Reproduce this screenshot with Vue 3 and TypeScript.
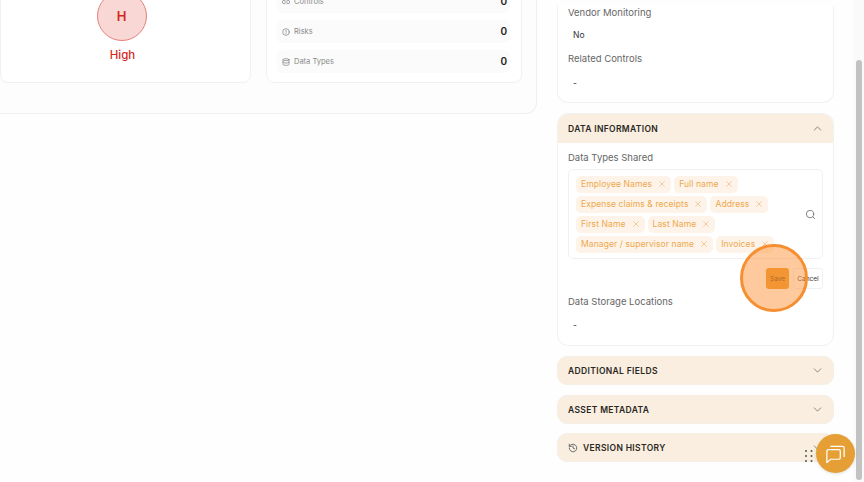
<script setup lang="ts">
const counts = [
  { name: 'Controls', icon: 'controls' },
  { name: 'Risks', icon: 'risk' },
  { name: 'Data Types', icon: 'data' },
]
const chipRows = [
  ['Employee Names', 'Full name'],
  ['Expense claims & receipts', 'Address'],
  ['First Name', 'Last Name'],
  ['Manager / supervisor name', 'Invoices'],
]
const closedSections = ['ADDITIONAL FIELDS', 'ASSET METADATA']
</script>

<template>
  <div class="page">
    <main class="left">
      <section class="panel">
        <div class="card risk-card">
          <div class="badge">H</div>
          <div class="level">High</div>
        </div>
        <div class="card count-card">
          <div v-for="c in counts" :key="c.name" class="count-row">
            <svg class="ci" viewBox="0 0 24 24" fill="none" stroke="currentColor" stroke-width="2" stroke-linecap="round" stroke-linejoin="round">
              <template v-if="c.icon === 'risk'">
                <circle cx="12" cy="12" r="10" /><path d="M12 7v6M12 16.500v.5" />
              </template>
              <template v-else-if="c.icon === 'data'">
                <ellipse cx="12" cy="5" rx="9" ry="3" /><path d="M3 5v14c0 1.700 4 3 9 3s9-1.300 9-3V5M3 12c0 1.700 4 3 9 3s9-1.300 9-3" />
              </template>
              <template v-else>
                <path d="M9 7H6a5 5 0 0 0 0 10h3M15 7h3a5 5 0 0 1 0 10h-3M8 12h8" />
              </template>
            </svg>
            <span class="cname">{{ c.name }}</span>
            <span class="cval">0</span>
          </div>
        </div>
      </section>
    </main>

    <aside class="right">
      <div class="box first">
        <div class="label">Vendor Monitoring</div>
        <div class="value no">No</div>
        <div class="label second">Related Controls</div>
        <div class="value dash">-</div>
      </div>

      <div class="box section">
        <header class="head open">
          <span>DATA INFORMATION</span>
          <svg class="chev" viewBox="0 0 24 24" fill="none" stroke="currentColor" stroke-width="1.600" stroke-linecap="round" stroke-linejoin="round"><path d="m6 15 6-6 6 6" /></svg>
        </header>
        <div class="body">
          <div class="label">Data Types Shared</div>
          <div class="picker">
            <div class="chips">
              <div v-for="(row, i) in chipRows" :key="i" class="chip-row">
                <span v-for="t in row" :key="t" class="chip">
                  {{ t }}
                  <svg viewBox="0 0 24 24" fill="none" stroke="currentColor" stroke-width="2" stroke-linecap="round"><path d="M5 5l14 14M19 5 5 19" /></svg>
                </span>
              </div>
            </div>
            <svg class="search" viewBox="0 0 24 24" fill="none" stroke="currentColor" stroke-width="2" stroke-linecap="round"><circle cx="11" cy="11" r="8" /><path d="m21 21-4.300-4.300" /></svg>
          </div>
          <div class="actions">
            <button class="save">Save</button>
            <button class="cancel">Cancel</button>
          </div>
          <div class="label storage">Data Storage Locations</div>
          <div class="value">-</div>
        </div>
      </div>

      <header v-for="s in closedSections" :key="s" class="head closed">
        <span>{{ s }}</span>
        <svg class="chev" viewBox="0 0 24 24" fill="none" stroke="currentColor" stroke-width="1.600" stroke-linecap="round" stroke-linejoin="round"><path d="m6 9 6 6 6-6" /></svg>
      </header>
      <header class="head closed">
        <span class="with-icon">
          <svg class="hist" viewBox="0 0 24 24" fill="none" stroke="currentColor" stroke-width="2" stroke-linecap="round" stroke-linejoin="round"><path d="M3 12a9 9 0 1 0 3-6.700L3 8" /><path d="M3 3v5h5M12 7v5l4 2" /></svg>
          VERSION HISTORY
        </span>
        <svg class="chev" viewBox="0 0 24 24" fill="none" stroke="currentColor" stroke-width="1.600" stroke-linecap="round" stroke-linejoin="round"><path d="m6 9 6 6 6-6" /></svg>
      </header>
    </aside>

    <div class="scrollbar"><div class="thumb"></div></div>

    <div class="pulse"></div>
    <svg class="grip" viewBox="0 0 8 12" fill="#555"><circle cx="1" cy="1" r="1" /><circle cx="6.500" cy="1" r="1" /><circle cx="1" cy="6" r="1" /><circle cx="6.500" cy="6" r="1" /><circle cx="1" cy="11" r="1" /><circle cx="6.500" cy="11" r="1" /></svg>
    <button class="chat" aria-label="Chat">
      <svg viewBox="0 0 24 24" fill="none" stroke="#fff" stroke-width="1.300" stroke-linejoin="round" stroke-linecap="round"><path d="M3 9.500A1.500 1.500 0 0 1 4.500 8h11A1.500 1.500 0 0 1 17 9.500v7a1.500 1.500 0 0 1-1.500 1.500H7l-4 3.500z" /><path d="M7 4.500h12.500A1.500 1.500 0 0 1 21 6v9" /></svg>
    </button>
  </div>
</template>

<style>
html, body { margin: 0; background: #fefefe; }
</style>

<style scoped>
.page {
  position: relative;
  display: flex;
  width: 864px;
  height: 482px;
  overflow: hidden;
  background: #fefefe;
  font-family: Inter, "Liberation Sans", sans-serif;
}
.left { width: 537px; flex: none; }
.panel {
  display: flex;
  align-items: flex-end;
  gap: 15px;
  box-sizing: border-box;
  height: 114px;
  padding: 0 14px 30px 0;
  background: #fdfdfd;
  border: solid #f0f0f0;
  border-width: 0 1px 1px 0;
  border-bottom-right-radius: 11px;
}
.card {
  box-sizing: border-box;
  background: #fff;
  border: 1px solid #f1f1f1;
  border-radius: 8px;
}
.risk-card {
  flex: none;
  width: 251px;
  height: 130px;
  display: flex;
  flex-direction: column;
  align-items: center;
  justify-content: flex-end;
  padding: 0 0 19px 0;
}
.badge {
  box-sizing: border-box;
  width: 50px;
  height: 50px;
  border-radius: 50%;
  display: grid;
  place-items: center;
  background: #f8d7d5;
  border: 1px solid #e5817b;
  color: #d4281e;
  font-size: 13px;
  font-weight: 600;
  transform: translateX(-4px);
}
.level {
  margin-top: 6px;
  color: #d4281e;
  font-size: 11.500px;
  font-weight: 500;
  line-height: 16px;
  transform: translateX(-3px);
}
.count-card {
  flex: 1;
  height: 130px;
  display: flex;
  flex-direction: column;
  justify-content: flex-end;
  gap: 7px;
  padding: 0 11px 9px 10px;
}
.count-row {
  display: flex;
  align-items: center;
  height: 23px;
  padding: 0 3px 0 5px;
  background: #fbfbfb;
  border-radius: 6px;
}
.ci { width: 8px; height: 8px; color: #777; flex: none; }
.cname { margin-left: 4px; font-size: 7.500px; color: #8a8a8a; }
.cval { margin-left: auto; padding-bottom: 1px; font-size: 10px; font-weight: 600; color: #222; }

.right {
  width: 277px;
  flex: none;
  margin-left: 20px;
  display: flex;
  flex-direction: column;
  justify-content: flex-end;
  padding-bottom: 20px;
  box-sizing: border-box;
  height: 482px;
}
.box {
  box-sizing: border-box;
  background: #fff;
  border: 1px solid #f1f1f1;
  border-radius: 11px;
}
.first {
  flex: none;
  padding: 0 10px 13px;
  border-top: 0;
  border-top-left-radius: 0;
  border-top-right-radius: 0;
  margin-bottom: 10px;
}
.label { font-size: 9.500px; line-height: 14px; color: #666; }
.value { font-size: 8.500px; line-height: 12px; color: #333; padding: 10px 0 0 5px; }
.no { padding-top: 9px; }
.dash { padding-top: 11px; }
.second { margin-top: 11px; }
.section { flex: none; overflow: hidden; margin-bottom: 10px; }
.head {
  flex: none;
  box-sizing: border-box;
  height: 29px;
  display: flex;
  align-items: center;
  justify-content: space-between;
  padding: 0 9px 0 10px;
  background: #f9eee0;
  color: #2a2723;
  font-size: 8.500px;
  font-weight: 600;
  letter-spacing: 0.35px;
}
.closed {
  border: 1px solid #f6efe6;
  border-radius: 10px;
  margin-bottom: 10px;
}
.closed:nth-last-child(2) { margin-bottom: 9px; }
.closed:last-child { margin-bottom: 0; }
.chev { width: 13px; height: 13px; color: #777; }
.with-icon { display: flex; align-items: center; gap: 5px; }
.hist { width: 10px; height: 10px; color: #555; }
.body { padding: 8px 10px 14px; }
.picker {
  box-sizing: border-box;
  display: flex;
  align-items: center;
  justify-content: space-between;
  height: 90px;
  margin-top: 4px;
  padding: 0 6px 0 7px;
  background: #fff;
  border: 1px solid #f0f0f0;
  border-radius: 5px;
}
.chips { display: flex; flex-direction: column; gap: 3px; }
.chip-row { display: flex; gap: 3px; }
.chip {
  display: inline-flex;
  align-items: center;
  gap: 6px;
  height: 17px;
  padding: 0 5px;
  background: #fdf3e8;
  border-radius: 5px;
  color: #eda94f;
  font-size: 8.500px;
  letter-spacing: 0.1px;
  white-space: nowrap;
}
.chip svg { width: 8px; height: 8px; color: #efb778; }
.search { width: 11px; height: 11px; color: #777; }
.actions {
  display: flex;
  justify-content: flex-end;
  gap: 4px;
  margin-top: 9px;
}
.storage { margin-top: 6px; }
.actions button {
  box-sizing: border-box;
  height: 21px;
  padding: 0;
  border-radius: 3px;
  font-family: inherit;
  font-size: 6.500px;
}
.save { width: 23px; background: #e8952a; border: 0; color: #5a3d18; }
.cancel { width: 30px; background: #fff; border: 1px solid #f1f1f1; color: #333; }

.scrollbar {
  position: absolute;
  top: 0;
  right: 0;
  bottom: 0;
  width: 11px;
  background: #fafafa;
}
.thumb {
  position: absolute;
  top: 60px;
  bottom: 2px;
  left: 3px;
  width: 6px;
  border-radius: 3px;
  background: #c2c2c2;
}
.pulse {
  position: absolute;
  left: 740px;
  top: 244px;
  box-sizing: border-box;
  width: 68px;
  height: 68px;
  border-radius: 50%;
  background: rgba(253, 150, 60, 0.5);
  border: 3px solid #f58f31;
}
.grip { position: absolute; left: 805px; top: 450px; width: 8px; height: 12px; }
.chat {
  position: absolute;
  left: 816px;
  top: 434px;
  width: 39px;
  height: 39px;
  padding: 8px;
  border: 0;
  border-radius: 50%;
  background: #e69f35;
  box-shadow: 0 1px 3px rgba(0, 0, 0, 0.12);
}
.chat svg { display: block; width: 23px; height: 23px; }
</style>
